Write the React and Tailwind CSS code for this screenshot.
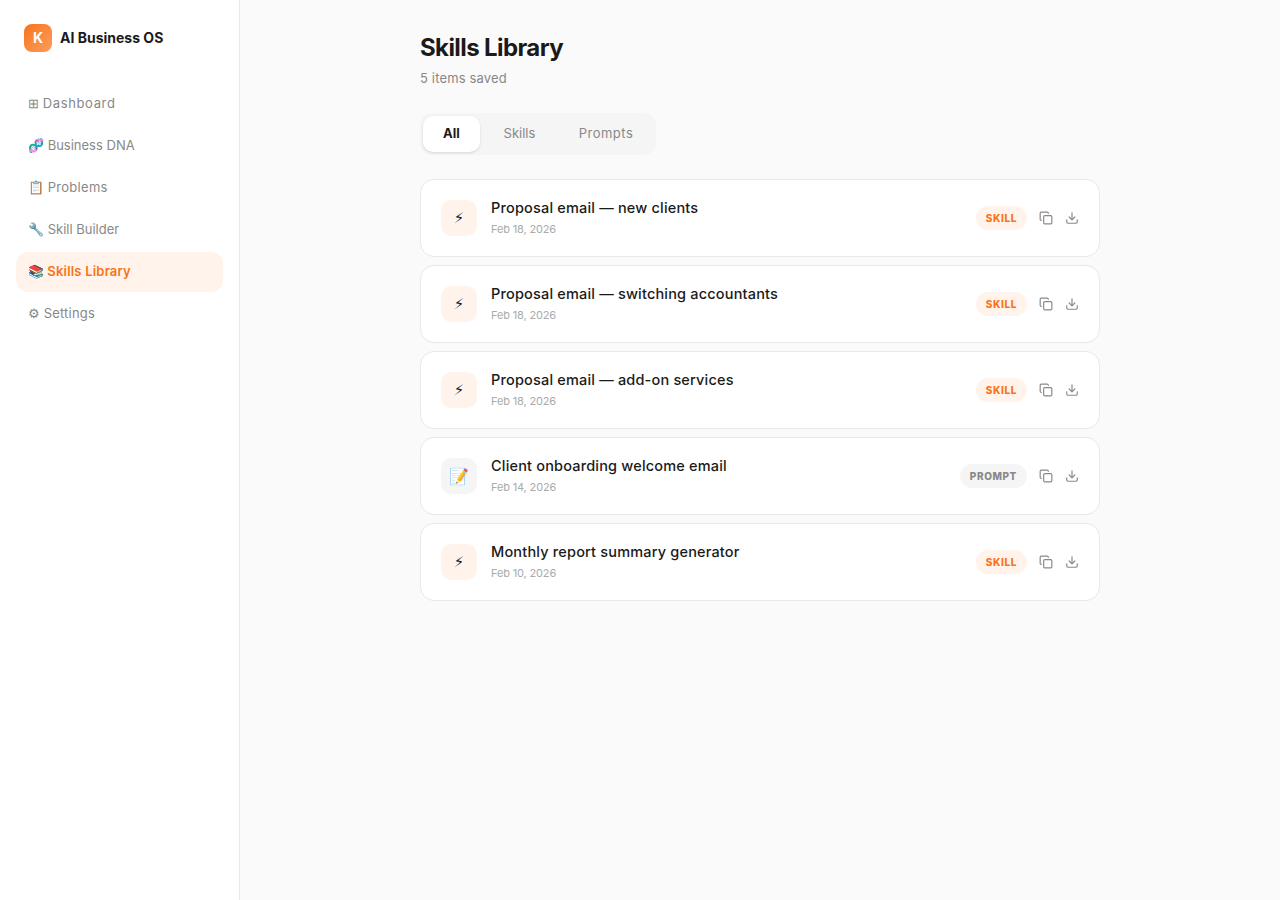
import { Copy, Download } from 'lucide-react'

const navItems = [
  { icon: '⊞', label: 'Dashboard', track: 'tracking-[0.65px]' },
  { icon: '🧬', label: 'Business DNA', track: 'tracking-normal' },
  { icon: '📋', label: 'Problems', track: 'tracking-[0.3px]' },
  { icon: '🔧', label: 'Skill Builder', track: 'tracking-normal' },
  { icon: '📚', label: 'Skills Library', track: 'tracking-[0.2px]', active: true },
  { icon: '⚙', label: 'Settings', track: 'tracking-[0.2px]' },
]

const items = [
  { title: 'Proposal email — new clients', date: 'Feb 18, 2026', type: 'skill' },
  { title: 'Proposal email — switching accountants', date: 'Feb 18, 2026', type: 'skill' },
  { title: 'Proposal email — add-on services', date: 'Feb 18, 2026', type: 'skill' },
  { title: 'Client onboarding welcome email', date: 'Feb 14, 2026', type: 'prompt' },
  { title: 'Monthly report summary generator', date: 'Feb 10, 2026', type: 'skill' },
]

function Row({ title, date, type }) {
  const isSkill = type === 'skill'
  return (
    <div className="flex h-[78px] items-center gap-3.5 rounded-[14px] border border-[#e8e8e8] bg-white px-5">
      <div className={`flex h-9 w-9 shrink-0 items-center justify-center rounded-[10px] ${isSkill ? "bg-[#fff3eb] font-['DejaVu_Sans',sans-serif] text-[15px] text-[#1a1a1a]" : 'bg-[#f5f5f5] text-base'}`}>
        {isSkill ? '⚡\uFE0E' : '📝'}
      </div>
      <div className="min-w-0 flex-1 pb-[3px]">
        <div className="text-[14.5px] leading-[21px] font-medium tracking-[0.18px] text-[#1a1a1a]">{title}</div>
        <div className="mt-[3px] text-[11px] leading-[16px] tracking-[-0.15px] text-[#aaaaaa]">{date}</div>
      </div>
      <div className="flex items-center gap-3">
        <span className={`rounded-full px-2.5 py-1 text-[10px] leading-4 font-extrabold tracking-[0.06em] uppercase ${isSkill ? 'bg-[#fff3eb] text-[#f97316]' : 'bg-[#f5f5f5] text-[#888888]'}`}>
          {type}
        </span>
        <Copy size={14} className="text-[#888888]" />
        <Download size={14} className="text-[#888888]" />
      </div>
    </div>
  )
}

export default function App() {
  return (
    <div className="flex min-h-screen bg-[#fafafa] font-['Inter',sans-serif]">
      {/* Sidebar */}
      <aside className="w-60 shrink-0 border-r border-[#e8e8e8] bg-white px-4">
        <div className="flex h-[76px] items-center gap-2 px-2">
          <div className="flex h-7 w-7 items-center justify-center rounded-lg bg-gradient-to-br from-[#f97316] to-[#fb9d5a] text-sm font-bold text-white">K</div>
          <span className="text-sm font-bold text-[#1a1a1a]">AI Business OS</span>
        </div>
        <nav className="mt-2 flex flex-col gap-0.5">
          {navItems.map(n => (
            <div key={n.label} className={`flex h-10 items-center whitespace-pre rounded-xl px-3 text-[13px] ${n.active ? 'bg-[#fff3eb] font-semibold text-[#f97316]' : 'text-[#888888]'}`}>
              {n.icon} <span className={n.track}>{n.label}</span>
            </div>
          ))}
        </nav>
      </aside>

      {/* Main */}
      <main className="flex-1 pt-8">
        <div className="mx-auto w-[680px]">
          <h1 className="text-2xl leading-8 font-bold tracking-[-0.6px] text-[#1a1a1a]">Skills Library</h1>
          <p className="mt-1 text-[13px] leading-5 tracking-[0.15px] text-[#888888]">5 items saved</p>

          <div className="mt-[25px] inline-flex h-[42px] items-center rounded-xl bg-[#f5f5f5] p-[3px]">
            <button className="h-9 w-[57px] rounded-[10px] bg-white text-[13px] font-bold text-[#1a1a1a] shadow-sm">All</button>
            <button className="h-9 w-[79px] text-[13px] text-[#888888]">Skills</button>
            <button className="h-9 w-[94px] text-[13px] tracking-[0.5px] text-[#888888]">Prompts</button>
          </div>

          <div className="mt-6 flex flex-col gap-2">
            {items.map(i => <Row key={i.title} {...i} />)}
          </div>
        </div>
      </main>
    </div>
  )
}
